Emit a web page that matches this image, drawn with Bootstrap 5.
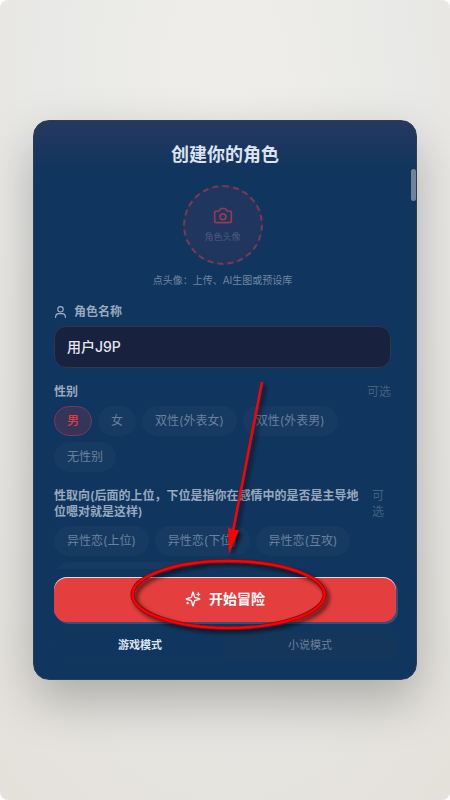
<!DOCTYPE html>
<html lang="zh-CN">
<head>
<meta charset="utf-8">
<meta name="viewport" content="width=device-width, initial-scale=1">
<title>创建你的角色</title>
<link href="https://cdn.jsdelivr.net/npm/bootstrap@5.3.0/dist/css/bootstrap.min.css" rel="stylesheet">
<style>
html{background:#fff}
body{font-family:Inter,"Noto Sans CJK SC",sans-serif;font-size:12px;line-height:16px;background:#fff}
.stage{min-height:100vh;border-radius:8px;background:radial-gradient(ellipse 80% 95% at 50% 14%,#efeeea 0%,#e9e9e7 50%,#e6e4e0 85%,#e4e1da 110%)}
.panel{width:100%;height:70vh;min-height:480px;margin:0 33px;padding:0 20px;padding-bottom:20px;border:1px solid #2b3d57;border-radius:16px;color:#a6b5c7;
background:linear-gradient(#26385f,#10355f 50px);box-shadow:0 20px 50px rgba(0,0,0,.26)}
.title{font-size:18px;line-height:24px;font-weight:700;color:#dbe3ee;padding:22px 0 2px}
.scroller{overflow:hidden;min-height:0;padding-right:5px}
.thumb{position:absolute;right:0;top:48px;width:5px;height:32px;border-radius:3px;background:#70839b}
.avatar{width:80px;height:80px;margin-top:16px;color:#923c50;background:#20365f;border:2px dashed #7b3a51;border-radius:50%;font-size:9px;line-height:14px}
.avatar span{color:#4c5a7c}
.hint{font-size:10px;line-height:16px;color:#7187a0;margin-top:7px}
.field-label{font-weight:600;color:#98a9bd}
.name-row{margin-top:16px;gap:7px}
.name-input{height:42px;margin-top:6px;border-radius:12px;border:1px solid #2c384e;background:#18213e;color:#e4e8ee;font-size:14px;font-weight:500;padding:0 12px 2px}
.name-input:focus{background:#18213e;color:#e4e8ee}
.group-head{margin-top:16px;gap:12px}
.optional{color:#42607f}
.optional.narrow{width:19px}
.pills{gap:6px;margin-top:6px}
.pill{height:30px;line-height:16px;padding:0 12px;border:1px solid transparent;border-radius:15px;background:#173a62;color:#6b819b;font-size:12px}
.pill.active{background:#333559;border-color:#7d3952;color:#e03b42;font-weight:500}
.pill.wide{width:142px}
.pill.medium{width:94px}
.start{height:45px;margin-top:8px;border:0;border-radius:13px;background:#e53e3e;color:#fff;font-size:14px;font-weight:700;gap:8px;padding:0 0 2px;box-shadow:inset 0 1px #e8d9e1,2px 2px #33517a}
.start:hover{background:#e53e3e;color:#fff}
.modes{margin-top:9px;height:28px;border-radius:8px;background:#15365b;padding:1px}
.mode{border:0;border-radius:7px;background:none;color:#6d7f97;font-size:11px;line-height:16px}
.mode.active{background:#10355f;color:#dce5f0;font-weight:700}
.note{position:absolute;left:50%;top:249px;margin-left:-105px;pointer-events:none;overflow:visible}
</style>
</head>
<body>
<main class="stage d-flex align-items-center justify-content-center">
<section class="panel position-relative d-flex flex-column">
  <h1 class="title text-center m-0">创建你的角色</h1>
  <div class="scroller flex-grow-1">
    <div class="text-center">
      <button class="avatar p-0 d-inline-flex flex-column align-items-center justify-content-center" type="button">
        <svg class="mb-1" width="20" height="20" viewBox="0 0 24 24" fill="none" stroke="currentColor" stroke-width="2" stroke-linejoin="round" stroke-linecap="round"><path d="M14.5 3h-5L7 6H4a2 2 0 0 0-2 2v10a2 2 0 0 0 2 2h16a2 2 0 0 0 2-2V8a2 2 0 0 0-2-2h-3z"/><circle cx="12" cy="13" r="3.5"/></svg>
        <span>角色头像</span>
      </button>
      <div class="hint">点头像：上传、AI生图或预设库</div>
    </div>
    <div class="name-row d-flex align-items-center">
      <svg width="13" height="14" viewBox="0 0 24 24" fill="none" stroke="currentColor" stroke-width="2" stroke-linecap="round"><circle cx="12" cy="7" r="5"/><path d="M3 22v-2a6 6 0 0 1 6-5h6a6 6 0 0 1 6 5v2"/></svg>
      <label class="field-label" for="name">角色名称</label>
    </div>
    <input class="name-input form-control shadow-none" id="name" type="text" value="用户J9P">
    <div class="group-head d-flex justify-content-between"><span class="field-label">性别</span><span class="optional">可选</span></div>
    <div class="pills d-flex flex-wrap">
      <button class="pill active" type="button">男</button>
      <button class="pill" type="button">女</button>
      <button class="pill" type="button">双性(外表女)</button>
      <button class="pill" type="button">双性(外表男)</button>
      <button class="pill" type="button">无性别</button>
    </div>
    <div class="group-head d-flex justify-content-between"><span class="field-label">性取向(后面的上位，下位是指你在感情中的是否是主导地位嗯对就是这样)</span><span class="optional narrow flex-shrink-0">可选</span></div>
    <div class="pills d-flex flex-wrap">
      <button class="pill" type="button">异性恋(上位)</button>
      <button class="pill" type="button">异性恋(下位)</button>
      <button class="pill" type="button">异性恋(互攻)</button>
      <div class="pill wide"></div>
      <div class="pill medium"></div>
    </div>
  </div>
  <div class="thumb"></div>
  <button class="start btn w-100 flex-shrink-0 d-flex align-items-center justify-content-center" type="button">
    <svg width="16" height="16" viewBox="0 0 24 24" fill="none" stroke="currentColor" stroke-width="2" stroke-linecap="round" stroke-linejoin="round"><path d="M9.9 15.5A2 2 0 0 0 8.5 14.1l-6.1-1.6a.5.5 0 0 1 0-1L8.5 9.9A2 2 0 0 0 9.9 8.5l1.6-6.1a.5.5 0 0 1 1 0L14.1 8.5A2 2 0 0 0 15.5 9.9l6.1 1.6a.5.5 0 0 1 0 1L15.5 14.1a2 2 0 0 0-1.4 1.4l-1.6 6.1a.5.5 0 0 1-1 0zM20 3v4M22 5h-4M4 17v2M5 18H3"/></svg>
    <span>开始冒险</span>
  </button>
  <div class="modes d-flex flex-shrink-0">
    <button class="mode active w-50 p-0" type="button">游戏模式</button>
    <button class="mode w-50 p-0" type="button">小说模式</button>
  </div>
  <!-- Callout arrow and ring pointing at the start button -->
  <svg class="note" width="230" height="270" viewBox="120 370 230 270" aria-hidden="true">
    <defs><filter id="callout-shadow" x="-20%" y="-20%" width="140%" height="150%"><feDropShadow dx="3" dy="3" stdDeviation="2" flood-color="#000" flood-opacity=".65"/></filter></defs>
    <g filter="url(#callout-shadow)">
      <path d="M262 382 233 531" fill="none" stroke="#f00" stroke-width="2.5"/>
      <path d="M228 527 233 530 239 530 229 554z" fill="#f00"/>
    </g>
    <g filter="url(#callout-shadow)" fill="none">
      <ellipse cx="228.5" cy="594.5" rx="96" ry="33.5" stroke="#7a0d16" stroke-width="4"/>
      <ellipse cx="228.5" cy="594.5" rx="96" ry="33.5" stroke="#f00" stroke-width="2.5"/>
    </g>
  </svg>
</section>
</main>
<script src="https://cdn.jsdelivr.net/npm/bootstrap@5.3.0/dist/js/bootstrap.bundle.min.js"></script>
</body>
</html>
